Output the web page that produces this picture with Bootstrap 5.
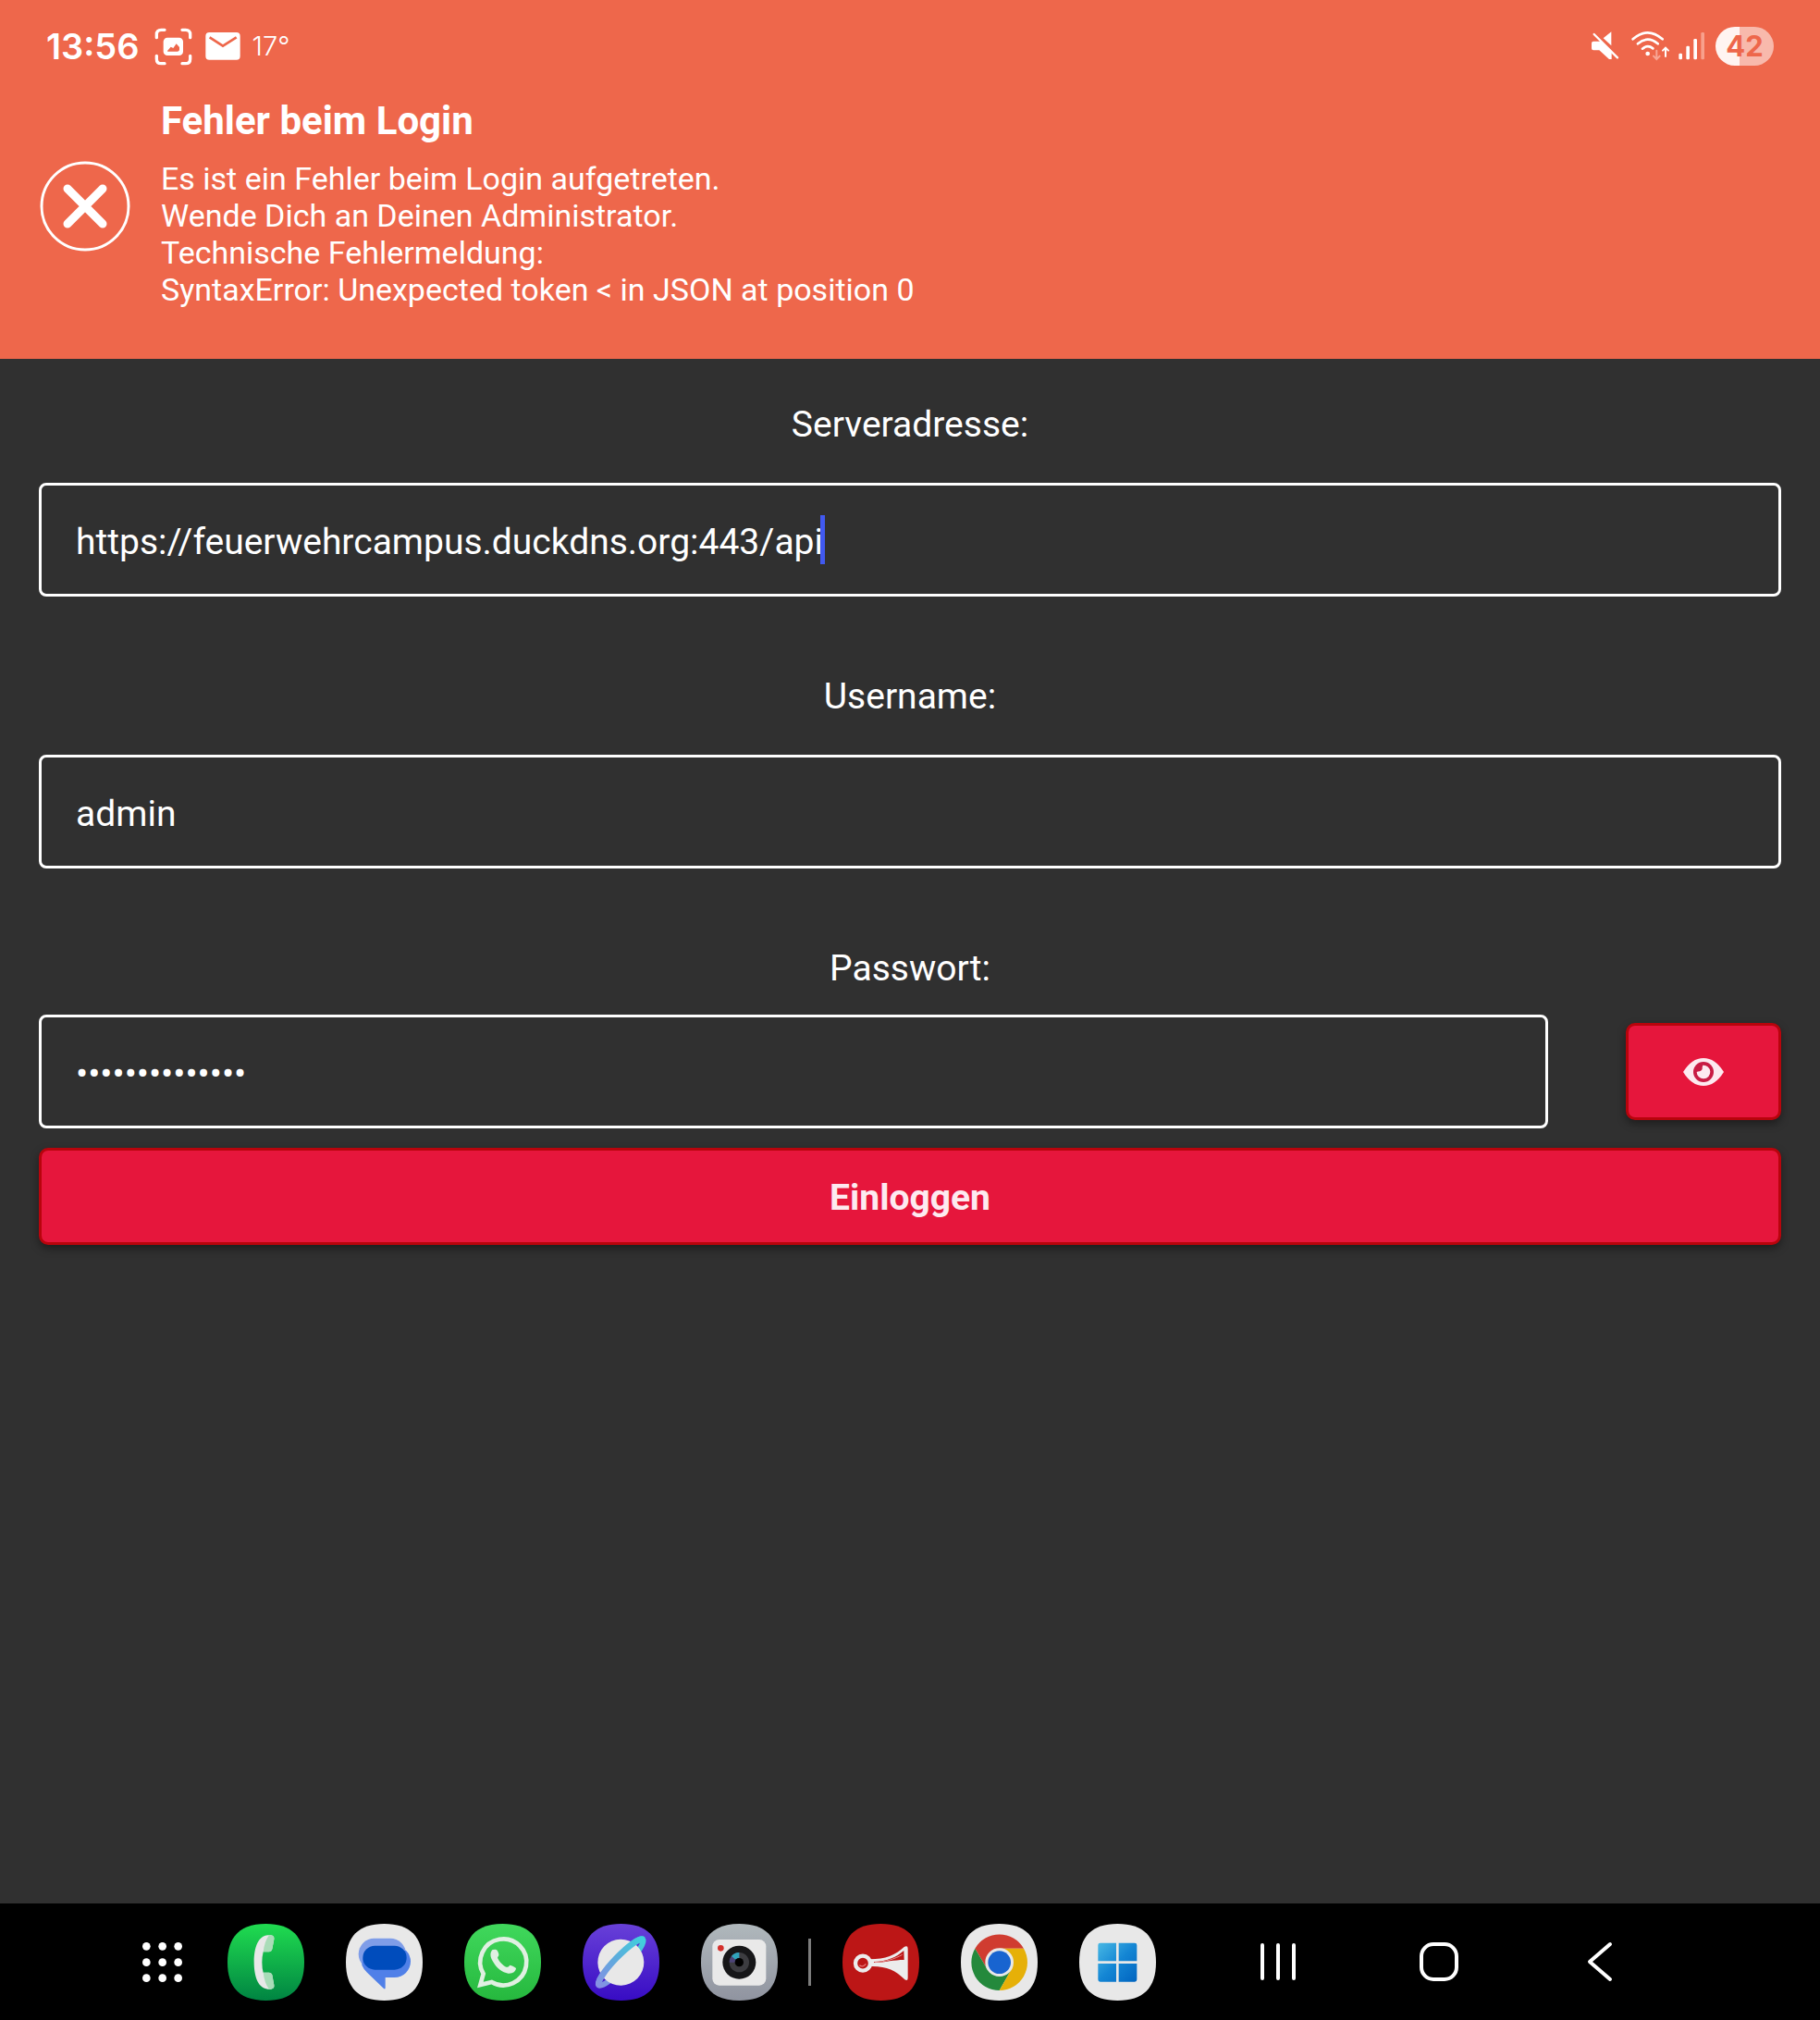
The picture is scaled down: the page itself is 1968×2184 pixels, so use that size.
<!DOCTYPE html>
<html lang="de">
<head>
<meta charset="utf-8">
<meta name="viewport" content="width=device-width, initial-scale=1">
<title>Login</title>
<link rel="stylesheet" href="https://cdn.jsdelivr.net/npm/bootstrap@5.3.0/dist/css/bootstrap.min.css">
<style>
  :root { --coral: #ee674b; --ink: #303030; --accent: #e6163c; --accent-line: #b8040c; }
  body { background: var(--ink); color: #fff; font-family: Roboto, "Noto Sans", sans-serif; font-size: 39px; line-height: 46px; }
  svg { display: block; flex: none; }
  .app-top { background: var(--coral); }
  .status-bar { height: 100px; padding: 0 50px; font-family: Inter, sans-serif; }
  .clock { font-size: 38px; font-weight: 600; margin-right: 16px; }
  .mail-icon { margin-left: 14px; }
  .temperature { font-size: 29px; font-weight: 300; margin-left: 13px; }
  .battery { width: 63px; height: 42px; line-height: 42px; font-size: 31px; font-weight: 700; color: var(--coral);
             background: linear-gradient(90deg, #fff4f1 26px, #f8b9ac 26px); }
  .login-error { padding: 6px 43px 48px; gap: 33px; }
  .login-error-text { padding-bottom: 7px; }
  .login-error h1 { font-size: 42px; line-height: 49px; font-weight: 700; margin: 0 0 18px; }
  .login-error p { font-size: 34px; line-height: 40px; margin: 0; }
  .login-form { padding: 48px 42px; }
  .login-form .form-label { display: block; text-align: center; margin: 0 0 40px; }
  .login-form .label-tight { margin-bottom: 27px; }
  .field-group { margin-bottom: 85px; }
  .login-form .form-control { height: 123px; padding: 4px 36px 0 37px; border: 3px solid #fff; border-radius: 8px;
             background: transparent; color: #fff; font-size: 39px; line-height: 46px; }
  .text-caret { left: 845px; top: 35px; width: 5px; height: 53px; background: #4159f0; }
  .password-row { gap: 84px; margin-bottom: 21px; }
  .btn-login { --bs-btn-color: #fdeaf0; --bs-btn-bg: var(--accent); --bs-btn-border-color: var(--accent-line);
             --bs-btn-hover-color: #fff; --bs-btn-hover-bg: #cf1235; --bs-btn-hover-border-color: var(--accent-line);
             height: 105px; padding: 0; border-width: 3px; border-radius: 10px; font-size: 39px; font-weight: 700;
             box-shadow: 0 4px 10px rgba(0, 0, 0, .4); }
  .btn-submit { padding-top: 4px; }
  .btn-eye { width: 168px; }
  .task-bar { height: 126px; padding: 0 208px 0 150px; background: #000; }
  .dock { gap: 45px; }
  .dock-line { width: 3px; height: 51px; margin: 0 34px 0 33px; background: #7c7c7c; }
  .nav-keys { gap: 114px; }
  .key { width: 60px; height: 60px; }
</style>
</head>
<body>
<svg width="0" height="0" class="position-absolute" aria-hidden="true">
  <defs>
    <path id="tile" d="M124.500 0C208 0 249 41 249 124.500S208 249 124.500 249 0 208 0 124.500 41 0 124.500 0Z"/>
    <linearGradient id="gPhone" x2="0" y2="1"><stop stop-color="#20dc50"/><stop offset="1" stop-color="#008442"/></linearGradient>
    <linearGradient id="gWhats" x2="0" y2="1"><stop stop-color="#40d85c"/><stop offset="1" stop-color="#26b83e"/></linearGradient>
    <linearGradient id="gPlanet" x2="0" y2="1"><stop stop-color="#6840d8"/><stop offset="1" stop-color="#380cc4"/></linearGradient>
    <linearGradient id="gOrbit" gradientUnits="userSpaceOnUse" x1="-105" x2="105" y1="0" y2="0"><stop stop-color="#8690e4"/><stop offset=".5" stop-color="#5cacdc"/><stop offset="1" stop-color="#40d0dc"/></linearGradient>
    <linearGradient id="gCam" x2="0" y2="1"><stop stop-color="#b0b8bc"/><stop offset="1" stop-color="#9094a0"/></linearGradient>
    <linearGradient id="gWin" gradientUnits="userSpaceOnUse" x1="951" y1="150" x2="1077" y2="276"><stop stop-color="#48b8e4"/><stop offset=".5" stop-color="#1486d4"/><stop offset="1" stop-color="#0064c0"/></linearGradient>
  </defs>
</svg>

<div class="d-flex flex-column min-vh-100">
  <header class="app-top">
    <div class="status-bar d-flex align-items-center justify-content-between">
      <div class="d-flex align-items-center">
        <span class="clock">13:56</span>
        <svg width="41" height="41" viewBox="414 60 123 123" fill="none" stroke="#fff" stroke-width="10" stroke-linecap="round">
          <path d="M421 92V82Q421 67 436 67H447M504 67H515Q530 67 530 82V92M530 151V161Q530 176 515 176H504M447 176H436Q421 176 421 161V151"/>
          <rect x="443" y="92" width="64" height="58" rx="13" fill="#fff" stroke="none"/>
          <path d="M456 135L467 122L475 126L485 112L495 123V131Q495 136 489 137H457Z" fill="#ee674b" stroke="none"/>
        </svg>
        <svg class="mail-icon" width="38" height="32" viewBox="577 73 114 96">
          <rect x="578" y="76" width="112" height="89" rx="12" fill="#fff"/>
          <path d="M591 92L634 120L678 92" fill="none" stroke="#ee674b" stroke-width="8"/>
        </svg>
        <span class="temperature">17°</span>
      </div>
      <div class="d-flex align-items-center">
        <svg width="134" height="42" viewBox="81 57 402 126" fill="#fff" role="img" aria-label="Stumm, WLAN, Mobilfunk">
          <path d="M93 110Q93 104 99 104H122L158 140V162L150 162L118 133H99Q93 133 93 127ZM131 94L157 73V118Z"/>
          <g fill="none" stroke="#fff" stroke-width="8" stroke-linecap="round">
            <path d="M101 81L177 157" stroke-width="7"/>
            <path d="M227 97Q275 55 323 97M243 112Q275 84 308 112M258 128Q275 114 292 127"/>
            <path d="M333 153V128M324 134L333 125L342 134" stroke-width="6"/>
            <path d="M304 134V160M294 152L304 162L314 152" stroke-width="6" stroke="#f8a695"/>
          </g>
          <circle cx="275" cy="144" r="7"/>
          <rect x="376" y="143" width="11" height="20" rx="4"/><rect x="400" y="119" width="11" height="44" rx="4"/><rect x="424" y="96" width="11" height="67" rx="4"/><rect x="448" y="75" width="11" height="88" rx="4" fill="#f8a08c"/>
        </svg>
        <span class="battery rounded-pill text-center ms-1">42</span>
      </div>
    </div>
    <div class="login-error d-flex align-items-center" role="alert">
      <svg width="98" height="98" viewBox="0 0 98 98" fill="none" stroke="#fff" stroke-linecap="round" aria-hidden="true">
        <circle cx="49" cy="49" r="47" stroke-width="3"/><path d="M30 30L68 68M68 30L30 68" stroke-width="9"/>
      </svg>
      <div class="login-error-text">
        <h1>Fehler beim Login</h1>
        <p>Es ist ein Fehler beim Login aufgetreten.<br>Wende Dich an Deinen Administrator.<br>Technische Fehlermeldung:<br>SyntaxError: Unexpected token &lt; in JSON at position 0</p>
      </div>
    </div>
  </header>

  <main class="flex-grow-1">
    <form class="login-form">
      <div class="field-group">
        <label class="form-label" for="server">Serveradresse:</label>
        <div class="position-relative">
          <input class="form-control" id="server" type="text" value="https://feuerwehrcampus.duckdns.org:443/api">
          <span class="text-caret position-absolute"></span>
        </div>
      </div>
      <div class="field-group">
        <label class="form-label" for="user">Username:</label>
        <input class="form-control" id="user" type="text" value="admin">
      </div>
      <label class="form-label label-tight" for="pass">Passwort:</label>
      <div class="password-row d-flex align-items-center">
        <input class="form-control flex-grow-1" id="pass" type="password" value="feuerwehr12345">
        <button class="btn btn-login btn-eye d-flex align-items-center justify-content-center flex-shrink-0" type="button" aria-label="Passwort anzeigen">
          <svg width="44" height="30" viewBox="540 190 132 90">
            <path d="M540 235Q568 190 606 190T672 235Q644 280 606 280T540 235Z" fill="#fdeaf0"/>
            <circle cx="606" cy="235" r="33" fill="#c81c44"/>
            <path d="M604 213A22 22 0 1 1 584 235Q588 233 594 233Q604 228 602 220Z" fill="#fdeaf0"/>
          </svg>
        </button>
      </div>
      <button class="btn btn-login btn-submit w-100" type="submit">Einloggen</button>
    </form>
  </main>

  <footer class="task-bar d-flex align-items-center justify-content-between">
    <div class="d-flex align-items-center">
      <div class="dock d-flex align-items-center">
        <svg width="51" height="51" viewBox="90 136 153 153" fill="#fff" role="img" aria-label="Apps">
          <circle cx="115" cy="161" r="13"/><circle cx="167" cy="161" r="13"/><circle cx="218" cy="161" r="13"/>
          <circle cx="115" cy="213" r="13"/><circle cx="167" cy="213" r="13"/><circle cx="218" cy="213" r="13"/>
          <circle cx="115" cy="264" r="13"/><circle cx="167" cy="264" r="13"/><circle cx="218" cy="264" r="13"/>
        </svg>
        <svg width="83" height="83" viewBox="0 0 249 249" role="img" aria-label="Telefon">
          <use href="#tile" fill="url(#gPhone)"/>
          <g transform="translate(-377 -88)">
            <path d="M508 125H518Q530 127 528 138L522 170Q520 179 511 179H493Q489 195 489 213T493 246H511Q520 246 522 254L528 287Q530 298 518 300H508C478 298 463 262 463 212S478 127 508 125Z" fill="#e8e8e8"/>
            <path d="M512 125H518Q530 127 528 138L522 170Q520 179 511 179H493Q497 145 512 125ZM493 246H511Q520 246 522 254L528 287Q530 298 518 300H512Q497 281 493 246Z" fill="#a9dcb8"/>
          </g>
        </svg>
        <svg width="83" height="83" viewBox="0 0 249 249" role="img" aria-label="Nachrichten">
          <use href="#tile" fill="#e8e8e8"/>
          <g transform="translate(-760 -88)">
            <rect x="801" y="135" width="154" height="102" rx="51" fill="#7f9de8"/>
            <path d="M812 222L815 200L955 174Q970 190 970 210A52 52 0 0 1 918 262H888V296Q888 301 883 298L829 246Q818 236 812 222Z" fill="#5080e8"/>
            <rect x="815" y="159" width="142" height="78" rx="39" fill="#004cbc"/>
          </g>
        </svg>
        <svg width="83" height="83" viewBox="0 0 249 249" role="img" aria-label="WhatsApp">
          <use href="#tile" fill="url(#gWhats)"/>
          <g transform="translate(-95 -88)" fill="#e0f0e2">
            <path d="M147 286L157 250A75 75 0 1 1 184 277Z" fill="none" stroke="#e0f0e2" stroke-width="14" stroke-linejoin="miter"/>
            <path d="M187 172C178 180 178 195 188 210C200 232 218 245 238 249C252 250 262 243 263 232C258 227 250 223 243 222C240 226 236 230 231 228C220 222 208 210 203 198C205 193 208 190 207 186C205 178 203 172 196 171Z"/>
          </g>
        </svg>
        <svg width="83" height="83" viewBox="0 0 249 249" role="img" aria-label="Internet">
          <use href="#tile" fill="url(#gPlanet)"/>
          <g transform="translate(124 125) rotate(-46)">
            <ellipse rx="103" ry="20" fill="none" stroke="url(#gOrbit)" stroke-width="18"/>
            <circle r="75" fill="#e8e8e8"/>
            <path d="M-103 0A103 20 0 0 1 103 0" fill="none" stroke="url(#gOrbit)" stroke-width="20"/>
          </g>
        </svg>
        <svg width="83" height="83" viewBox="0 0 249 249" role="img" aria-label="Kamera">
          <use href="#tile" fill="url(#gCam)"/>
          <g transform="translate(-863 -88)">
            <rect x="900" y="139" width="174" height="149" rx="22" fill="#e9e9e9"/>
            <circle cx="927" cy="167" r="10" fill="#d4302c"/>
            <circle cx="987" cy="213" r="54" fill="#161618"/><circle cx="987" cy="213" r="32" fill="#3c3c40"/>
            <path d="M955 213A32 32 0 0 1 987 181V199A14 14 0 0 0 973 213Z" fill="#4c4478"/>
            <path d="M962 193A32 32 0 0 1 987 181V199Q980 199 975 204Z" fill="#30a4bc"/>
            <circle cx="987" cy="213" r="14" fill="#000"/>
          </g>
        </svg>
      </div>
      <span class="dock-line"></span>
      <div class="dock d-flex align-items-center">
        <svg width="83" height="83" viewBox="0 0 249 249" role="img" aria-label="Feuerwehr">
          <use href="#tile" fill="#bc1616"/>
          <g transform="translate(-122 -88)">
            <circle cx="188" cy="216" r="24" fill="none" stroke="#ececec" stroke-width="13"/>
            <path d="M177 222Q188 231 198 218" fill="none" stroke="#e87878" stroke-width="4"/>
            <path d="M210 203C262 203 294 189 322 163Q334 157 334 168V264Q334 274 324 269C294 238 262 224 210 226Z" fill="#ececec"/>
            <path d="M224 211C266 210 296 197 321 175L322 205C290 205 260 213 224 214Z" fill="#bc1616"/>
            <path d="M226 213C262 211 292 202 316 188" fill="none" stroke="#e88c8c" stroke-width="3"/>
          </g>
        </svg>
        <svg width="83" height="83" viewBox="0 0 249 249" role="img" aria-label="Chrome">
          <use href="#tile" fill="#e8e8e8"/>
          <g transform="translate(-506 -88)">
            <path d="M552 168A91 91 0 0 1 710 168H631L592 236Z" fill="#d03c30"/>
            <path d="M552 168A91 91 0 0 0 631 304L670 236H592Z" fill="#24893c"/>
            <path d="M710 168A91 91 0 0 1 631 304L670 236L631 168Z" fill="#e6b008"/>
            <circle cx="631" cy="213" r="46" fill="#e8e8e8"/><circle cx="631" cy="213" r="37" fill="#1864d0"/>
          </g>
        </svg>
        <svg width="83" height="83" viewBox="0 0 249 249" role="img" aria-label="Windows">
          <use href="#tile" fill="#e8e8e8"/>
          <g transform="translate(-890 -88)" fill="url(#gWin)">
            <path d="M958 150H1010V209H951V157Q951 150 958 150ZM1018 150H1070Q1077 150 1077 157V209H1018ZM951 217H1010V276H958Q951 276 951 269ZM1018 217H1077V269Q1077 276 1070 276H1018Z"/>
          </g>
        </svg>
      </div>
    </div>
    <div class="nav-keys d-flex align-items-center">
      <button class="btn key p-0 border-0" type="button" aria-label="Letzte Apps"><svg width="60" height="60" viewBox="0 0 60 60" fill="none" stroke="#fff" stroke-width="4" stroke-linecap="round"><path d="M13 12V48M30 12V48M47 12V48"/></svg></button>
      <button class="btn key p-0 border-0" type="button" aria-label="Startseite"><svg width="60" height="60" viewBox="0 0 60 60" fill="none" stroke="#fff" stroke-width="4"><rect x="11" y="11" width="38" height="38" rx="13"/></svg></button>
      <button class="btn key p-0 border-0" type="button" aria-label="Zurück"><svg width="60" height="60" viewBox="0 0 60 60" fill="none" stroke="#fff" stroke-width="4" stroke-linecap="round" stroke-linejoin="round"><path d="M41 11L19 30L41 49"/></svg></button>
    </div>
  </footer>
</div>
<script src="https://cdn.jsdelivr.net/npm/bootstrap@5.3.0/dist/js/bootstrap.bundle.min.js"></script>
</body>
</html>
